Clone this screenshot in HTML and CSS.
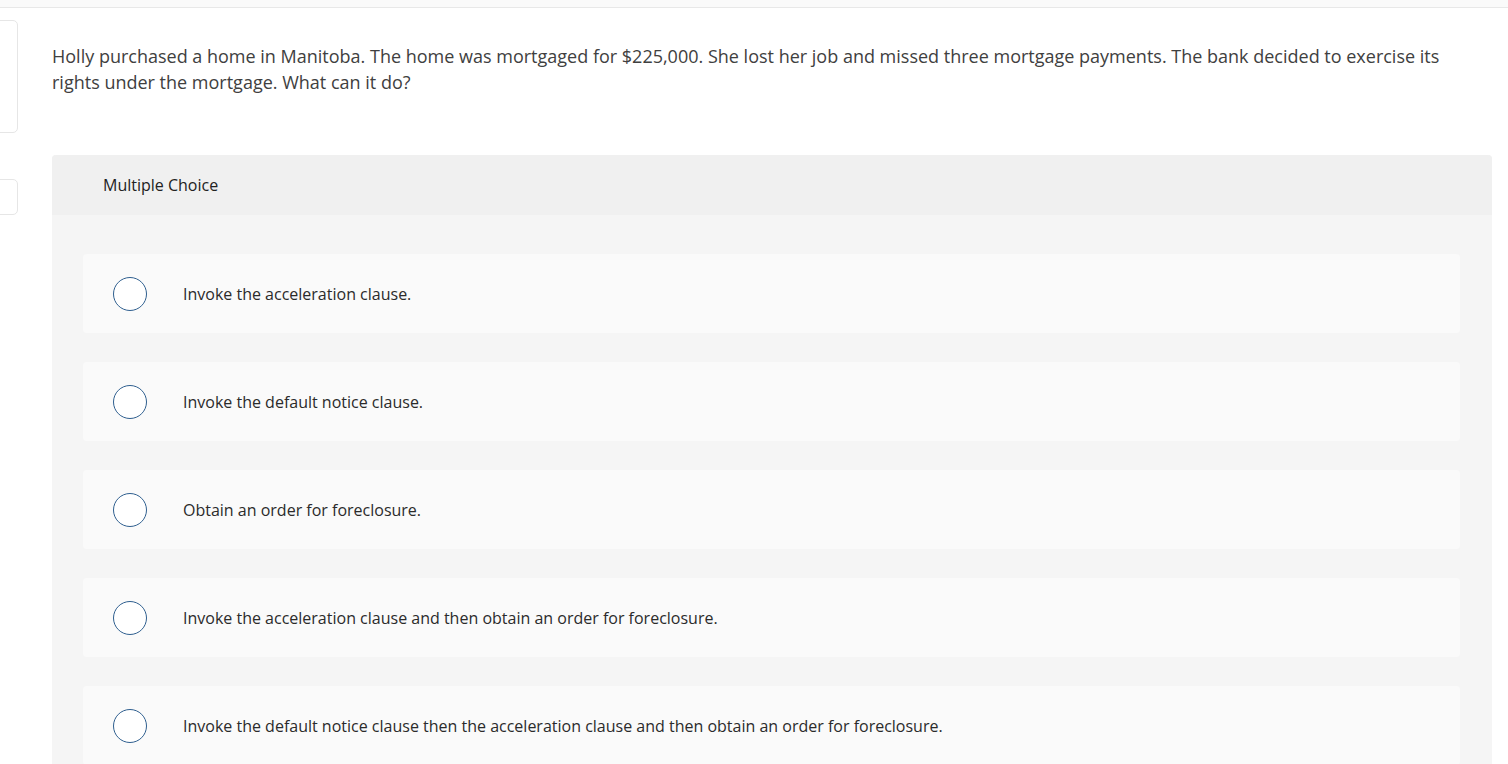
FILE: index.html
```html
<!DOCTYPE html>
<html lang="en">
<head>
<meta charset="UTF-8">
<title>Question</title>
<link rel="stylesheet" href="styles.css">
</head>
<body>
<div class="topbar"></div>
<div class="side-tab side-tab-big"></div>
<div class="side-tab side-tab-small"></div>

<div class="question">
  <p class="prompt">Holly purchased a home in Manitoba. The home was mortgaged for $225,000. She lost her job and missed three mortgage payments. The bank decided to exercise its rights under the mortgage. What can it do?</p>

  <div class="choices">
    <div class="choices-head">Multiple Choice</div>
    <div class="choices-body">
      <label class="option"><span class="radio"></span><span class="option-text">Invoke the acceleration clause.</span></label>
      <label class="option"><span class="radio"></span><span class="option-text">Invoke the default notice clause.</span></label>
      <label class="option"><span class="radio"></span><span class="option-text">Obtain an order for foreclosure.</span></label>
      <label class="option"><span class="radio"></span><span class="option-text">Invoke the acceleration clause and then obtain an order for foreclosure.</span></label>
      <label class="option"><span class="radio"></span><span class="option-text">Invoke the default notice clause then the acceleration clause and then obtain an order for foreclosure.</span></label>
    </div>
  </div>
</div>
</body>
</html>
```

FILE: styles.css
```css
body {
  margin: 0;
  font-family: "Open Sans", "Noto Sans", sans-serif;
  color: #333;
  background: #fff;
  overflow: hidden;
}
.topbar {
  height: 7px;
  background: #fafafa;
  border-bottom: 1px solid #e8e8e8;
}
.side-tab {
  position: absolute;
  left: -10px;
  width: 26px;
  border: 1px solid #e6e6e6;
  border-radius: 5px;
  background: #fff;
}
.side-tab-big {
  top: 20px;
  height: 111px;
}
.side-tab-small {
  top: 179px;
  height: 34px;
}
.question {
  padding: 0 16px 0 52px;
}
.prompt {
  margin: 0 30px 0 0;
  padding-top: 35px;
  font-size: 18px;
  line-height: 26px;
  color: #404040;
}
.choices {
  margin-top: 60px;
  border-radius: 4px 4px 0 0;
  background: #f5f5f5;
}
.choices-head {
  height: 60px;
  line-height: 60px;
  padding-left: 51px;
  font-size: 16px;
  color: #222;
  background: #f0f0f0;
  border-radius: 4px 4px 0 0;
}
.choices-body {
  padding: 39px 32px 0 31px;
  display: flex;
  flex-direction: column;
  gap: 29px;
}
.option {
  display: flex;
  align-items: center;
  height: 79px;
  padding-left: 30px;
  background: #fafafa;
  border-radius: 4px;
  cursor: pointer;
}
.radio {
  width: 32px;
  height: 32px;
  border: 1.5px solid #2f5f8f;
  border-radius: 50%;
  background: #fff;
  flex-shrink: 0;
}
.option-text {
  margin-left: 36px;
  font-size: 16px;
  color: #2b2b2b;
}
```
